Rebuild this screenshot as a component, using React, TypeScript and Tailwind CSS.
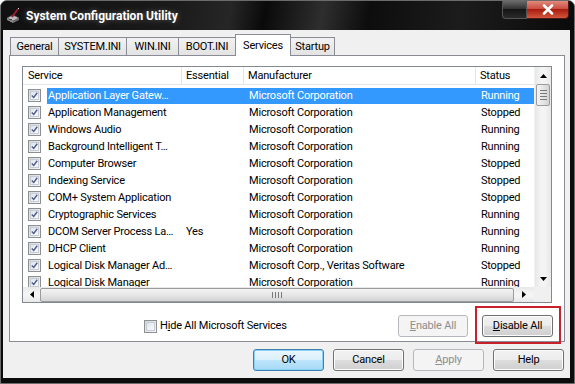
import type { ReactNode } from 'react';

const rows = [
  { name: 'Application Layer Gatew…', essential: '', maker: 'Microsoft Corporation', status: 'Running' },
  { name: 'Application Management', essential: '', maker: 'Microsoft Corporation', status: 'Stopped' },
  { name: 'Windows Audio', essential: '', maker: 'Microsoft Corporation', status: 'Running' },
  { name: 'Background Intelligent T…', essential: '', maker: 'Microsoft Corporation', status: 'Running' },
  { name: 'Computer Browser', essential: '', maker: 'Microsoft Corporation', status: 'Stopped' },
  { name: 'Indexing Service', essential: '', maker: 'Microsoft Corporation', status: 'Stopped' },
  { name: 'COM+ System Application', essential: '', maker: 'Microsoft Corporation', status: 'Stopped' },
  { name: 'Cryptographic Services', essential: '', maker: 'Microsoft Corporation', status: 'Running' },
  { name: 'DCOM Server Process La…', essential: 'Yes', maker: 'Microsoft Corporation', status: 'Running' },
  { name: 'DHCP Client', essential: '', maker: 'Microsoft Corporation', status: 'Running' },
  { name: 'Logical Disk Manager Ad…', essential: '', maker: 'Microsoft Corp., Veritas Software', status: 'Stopped' },
  { name: 'Logical Disk Manager', essential: '', maker: 'Microsoft Corporation', status: 'Running' },
];

const tabs = [
  { name: 'General', w: 'w-[49px]' },
  { name: 'SYSTEM.INI', w: 'w-[69px]' },
  { name: 'WIN.INI', w: 'w-[53px]' },
  { name: 'BOOT.INI', w: 'w-[58px]' },
  { name: 'Services', w: 'w-[56px]', active: true },
  { name: 'Startup', w: 'w-[45px]' },
];

function CheckBox({ checked }: { checked?: boolean }) {
  return (
    <div className="w-[13px] h-[13px] shrink-0 border border-[#8e8f8f] bg-[linear-gradient(135deg,#d4d9e2,#f4f6f9)] p-px">
      <div className="w-full h-full border border-[#c6ccd6] bg-[linear-gradient(135deg,#dfe4ec,#fafbfd)] flex items-center justify-center">
        {checked && (
          <svg width="9" height="9" viewBox="0 0 9 9">
            <path d="M1 4.5 L3.5 7 L8 1" fill="none" stroke="#4c5c88" strokeWidth="1.8" />
          </svg>
        )}
      </div>
    </div>
  );
}

function Button({ children, disabled, primary, w = 'w-[71px]' }: { children: ReactNode; disabled?: boolean; primary?: boolean; w?: string }) {
  return (
    <div
      className={
        `${w} h-[22px] pt-px rounded-[3px] border flex items-center justify-center ` +
        (disabled
          ? 'border-[#b5b8bc] bg-[#f4f4f4] text-[#8d8d8d]'
          : primary
            ? 'border-[#3c7fb1] bg-[linear-gradient(#eaf6fd_0%,#d9f0fc_50%,#bee6fd_50%,#a7d9f5_100%)] shadow-[inset_0_0_0_1px_#8ad1f5]'
            : 'border-[#707070] bg-[linear-gradient(#f2f2f2_0%,#ebebeb_50%,#dddddd_50%,#cfcfcf_100%)] shadow-[inset_0_0_0_1px_#fcfcfc]')
      }
    >
      {children}
    </div>
  );
}

function Arrow({ dir }: { dir: 'up' | 'down' | 'left' | 'right' }) {
  const d = {
    up: 'M0 4 L3.5 0 L7 4 Z',
    down: 'M0 0 L3.5 4 L7 0 Z',
    left: 'M4 0 L0 3.5 L4 7 Z',
    right: 'M0 0 L4 3.5 L0 7 Z',
  }[dir];
  const vertical = dir === 'up' || dir === 'down';
  return (
    <svg width={vertical ? 7 : 4} height={vertical ? 4 : 7} viewBox={vertical ? '0 0 7 4' : '0 0 4 7'}>
      <path d={d} fill="#000" />
    </svg>
  );
}

export default function App() {
  return (
    <div className="w-[575px] h-[384px] bg-[#0c0c0c] rounded-t-[7px] border border-[#6b6b6b] flex flex-col overflow-hidden font-['Roboto',sans-serif] text-[11px] tracking-[-0.2px] text-black">
      {/* title bar */}
      <div className="h-[29px] shrink-0 flex bg-[linear-gradient(100deg,#101010_0%,#1a1a1a_30%,#262626_40%,#0a0a0a_46%,#2e2e2e_56%,#0d0d0d_64%,#1c1c1c_80%,#0a0a0a_100%)]">
        <div className="flex items-center gap-[4px] pl-[4px] pt-px">
          <svg width="17" height="17" viewBox="0 0 17 17">
            <path d="M2 10 L8 7 L14 10 L8 13 Z" fill="#bdbdbd" stroke="#555" strokeWidth="0.6" />
            <path d="M2 10 L2 12 L8 15 L8 13 Z" fill="#8c8c8c" />
            <path d="M8 13 L8 15 L14 12 L14 10 Z" fill="#6f6f6f" />
            <rect x="4" y="11" width="3" height="1" fill="#444" />
            <path d="M7 9 L13 1" stroke="#9a1b2c" strokeWidth="2" />
            <path d="M13 1 L14 0" stroke="#ddd" strokeWidth="1" />
          </svg>
          <span className="text-white font-bold text-[12px] tracking-[0px] [text-shadow:0_0_6px_rgba(255,255,255,0.35)]">
            System Configuration Utility
          </span>
        </div>
        <div className="ml-auto mr-[5px] flex self-start">
          <div className="w-[25px] h-[18px] rounded-bl-[4px] border border-t-0 border-[#555] bg-[linear-gradient(#6a6a6a,#2c2c2c_50%,#151515_50%,#2a2a2a)]" />
          <div className="w-[42px] h-[18px] rounded-br-[4px] border border-l-0 border-t-0 border-[#4a1a1a] bg-[linear-gradient(#e08a7c,#c9483a_50%,#a91e10_50%,#d2553b)] flex items-center justify-center">
            <svg width="12" height="11" viewBox="0 0 12 11">
              <path d="M2 1.5 L10 9.5 M10 1.5 L2 9.5" stroke="#fff" strokeWidth="2.6" strokeLinecap="round" />
            </svg>
          </div>
        </div>
      </div>

      {/* client */}
      <div className="flex-1 ml-[2px] mr-[4px] mb-[5px] bg-[#f0f0f0] flex flex-col">
        {/* tabs */}
        <div className="mt-[4px] h-[21px] flex items-end pl-[7px] relative z-10">
          {tabs.map((t) =>
            t.active ? (
              <div
                key={t.name}
                className={`${t.w} h-[22px] -ml-px -mb-px border border-b-0 border-[#898c95] bg-white flex items-start justify-center pt-[3px]`}
              >
                {t.name}
              </div>
            ) : (
              <div
                key={t.name}
                className={`${t.w} h-[18px] -ml-px first:ml-0 border border-b-0 border-[#898c95] bg-[linear-gradient(#f2f2f2,#e3e3e3)] flex items-center justify-center pt-[1px]`}
              >
                {t.name}
              </div>
            )
          )}
        </div>

        {/* tab panel */}
        <div className="ml-[6px] mr-[5px] h-[287px] border border-[#898c95] bg-white flex flex-col">
          {/* list view */}
          <div className="ml-[12px] mt-[10px] w-[530px] h-[237px] border border-[#828790] flex flex-col">
            <div className="flex h-[220px]">
              <div className="w-[511px] flex flex-col">
                <div className="h-[18px] shrink-0 flex border-b border-[#e5e5e5] bg-white">
                  <div className="w-[159px] pl-[5px] pt-[2px] flex items-center border-r border-[#e5e5e5]">Service</div>
                  <div className="w-[62px] pl-[4px] pt-[2px] flex items-center border-r border-[#e5e5e5]">Essential</div>
                  <div className="w-[232px] pl-[4px] pt-[2px] flex items-center border-r border-[#e5e5e5]">Manufacturer</div>
                  <div className="w-[58px] pl-[4px] pt-[2px] flex items-center">Status</div>
                </div>
                <div className="flex-1 overflow-hidden pt-[2px]">
                  {rows.map((r, i) => (
                    <div key={r.name} className="h-[17px] flex items-center">
                      <div className="w-[159px] flex items-center pl-[5px] gap-[6px] overflow-hidden">
                        <CheckBox checked />
                        <span className={`h-[16px] flex items-center pl-[1px] pr-[2px] pt-px whitespace-nowrap ${i === 0 ? 'bg-[#3399ff] text-white flex-1' : ''}`}>
                          {r.name}
                        </span>
                      </div>
                      <div className={`w-[62px] h-[16px] flex items-center pl-[4px] pt-px ${i === 0 ? 'bg-[#3399ff] text-white' : ''}`}>{r.essential}</div>
                      <div className={`w-[232px] h-[16px] flex items-center pl-[5px] pt-px whitespace-nowrap ${i === 0 ? 'bg-[#3399ff] text-white' : ''}`}>{r.maker}</div>
                      <div className={`w-[58px] h-[16px] flex items-center pl-[5px] pt-px ${i === 0 ? 'bg-[#3399ff] text-white' : ''}`}>{r.status}</div>
                    </div>
                  ))}
                </div>
              </div>
              {/* vertical scrollbar */}
              <div className="w-[17px] flex flex-col bg-[linear-gradient(90deg,#e8e8e8,#f4f4f4_40%,#f4f4f4_60%,#e8e8e8)] border-l border-[#f0f0f0]">
                <div className="h-[17px] flex items-center justify-center">
                  <Arrow dir="up" />
                </div>
                <div className="mx-[1px] h-[22px] rounded-[2px] border border-[#9b9b9b] bg-[linear-gradient(90deg,#f3f3f3,#e6e6e6_50%,#d3d3d3)] flex flex-col items-center justify-center gap-[2px]">
                  <div className="w-[7px] h-px bg-[#7a7a7a]" />
                  <div className="w-[7px] h-px bg-[#7a7a7a]" />
                  <div className="w-[7px] h-px bg-[#7a7a7a]" />
                  <div className="w-[7px] h-px bg-[#7a7a7a]" />
                </div>
                <div className="flex-1" />
                <div className="h-[17px] flex items-center justify-center">
                  <Arrow dir="down" />
                </div>
              </div>
            </div>
            {/* horizontal scrollbar */}
            <div className="flex h-[15px]">
              <div className="w-[511px] flex items-center bg-[linear-gradient(#e8e8e8,#f4f4f4_40%,#f4f4f4_60%,#e8e8e8)]">
                <div className="w-[17px] flex items-center justify-center">
                  <Arrow dir="left" />
                </div>
                <div className="w-[474px] h-[14px] rounded-[2px] border border-[#9b9b9b] bg-[linear-gradient(#f3f3f3,#e6e6e6_50%,#d3d3d3)] flex items-center justify-center gap-[2px]">
                  <div className="w-px h-[6px] bg-[#7a7a7a]" />
                  <div className="w-px h-[6px] bg-[#7a7a7a]" />
                  <div className="w-px h-[6px] bg-[#7a7a7a]" />
                  <div className="w-px h-[6px] bg-[#7a7a7a]" />
                </div>
                <div className="flex-1 flex items-center justify-center">
                  <Arrow dir="right" />
                </div>
              </div>
              <div className="w-[17px] bg-[#f0f0f0]" />
            </div>
          </div>

          {/* buttons in panel */}
          <div className="mt-[12px] h-[22px] flex items-center">
            <div className="ml-[134px] flex items-center gap-[3px]">
              <CheckBox />
              <span className="pt-px">
                H<span className="underline">i</span>de All Microsoft Services
              </span>
            </div>
            <div className="ml-auto flex items-center gap-[14px] mr-[11px]">
              <Button disabled w="w-[70px]">
                <span className="underline">E</span>nable All
              </Button>
              <div className="relative">
                <Button w="w-[71px]">
                  <span className="underline">D</span>isable All
                </Button>
                <div className="absolute -left-[7px] -right-[8px] -top-[9px] -bottom-[7px] border-2 border-[#c8202c]" />
              </div>
            </div>
          </div>
        </div>

        {/* dialog buttons */}
        <div className="mt-[7px] flex justify-end gap-[9px] mr-[6px]">
          <Button primary>OK</Button>
          <Button>Cancel</Button>
          <Button disabled>
            <span className="underline">A</span>pply
          </Button>
          <Button>Help</Button>
        </div>
      </div>
    </div>
  );
}
